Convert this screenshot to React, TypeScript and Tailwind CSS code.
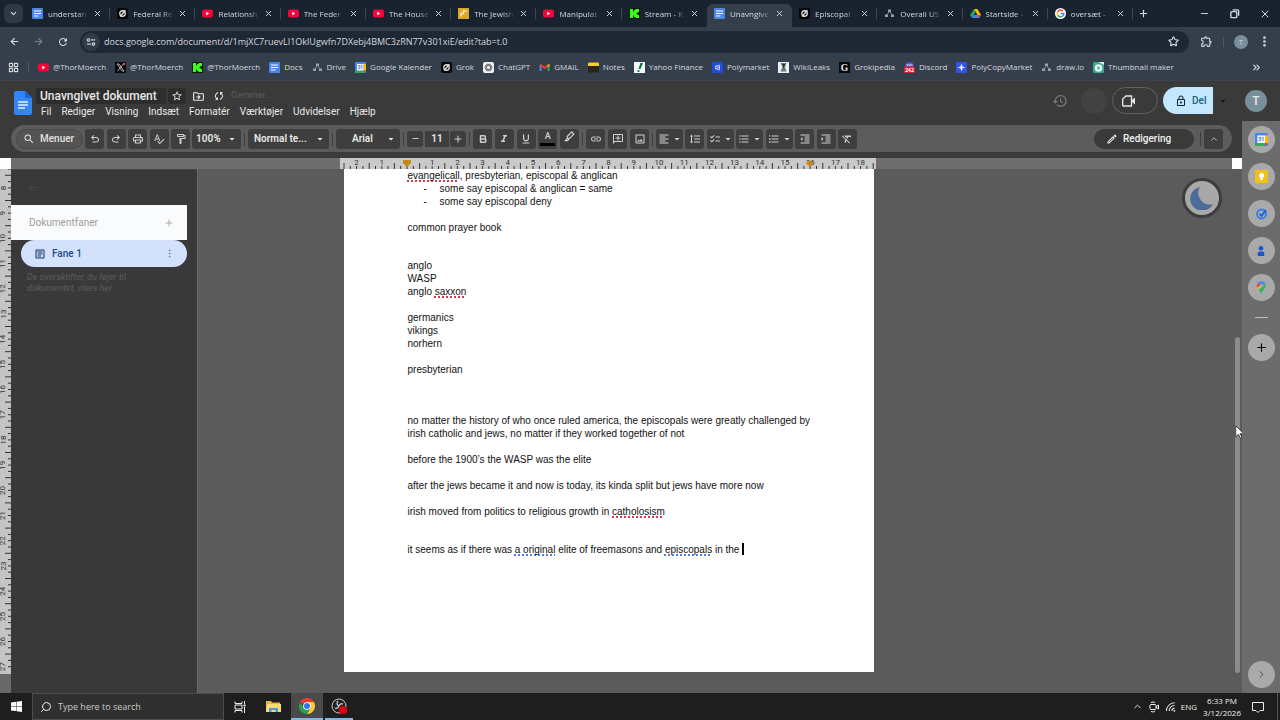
import type { ReactNode } from "react";
import {
  ArrowLeft,
  ArrowRight,
  Bold,
  ChevronDown,
  ChevronRight,
  ChevronUp,
  ChevronsRight,
  EllipsisVertical,
  LayoutGrid,
  Minus,
  Plus,
  Search,
  Star,
  X,
} from "lucide-react";
import {
  MdArrowDropDown,
  MdChecklist,
  MdFormatAlignLeft,
  MdFormatClear,
  MdFormatIndentDecrease,
  MdFormatIndentIncrease,
  MdFormatItalic,
  MdFormatLineSpacing,
  MdFormatListBulleted,
  MdFormatListNumbered,
  MdFormatUnderlined,
  MdLink,
  MdOutlineAddComment,
  MdOutlineArticle,
  MdOutlineDriveFileMove,
  MdOutlineEdit,
  MdOutlineExtension,
  MdOutlineFormatPaint,
  MdOutlineHistory,
  MdOutlineImage,
  MdOutlineLock,
  MdOutlinePrint,
  MdRefresh,
  MdSearch,
  MdSpellcheck,
  MdStarOutline,
  MdSync,
} from "react-icons/md";

type IconName =
  | "docs"
  | "grok"
  | "youtube"
  | "jewish"
  | "kick"
  | "drawio"
  | "drive"
  | "google"
  | "x"
  | "calendar"
  | "chatgpt"
  | "gmail"
  | "notes"
  | "yahoo"
  | "polymarket"
  | "wikileaks"
  | "grokipedia"
  | "discord"
  | "polycopy"
  | "thumbnail";

const tabs: { icon: IconName; title: string; active?: boolean }[] = [
  { icon: "docs", title: "understan" },
  { icon: "grok", title: "Federal Re" },
  { icon: "youtube", title: "Relationsh" },
  { icon: "youtube", title: "The Feder" },
  { icon: "youtube", title: "The House" },
  { icon: "jewish", title: "The Jewish" },
  { icon: "youtube", title: "Manipulat" },
  { icon: "kick", title: "Stream - K" },
  { icon: "docs", title: "Unavngive", active: true },
  { icon: "grok", title: "Episcopal" },
  { icon: "drawio", title: "Overall US" },
  { icon: "drive", title: "Startside -" },
  { icon: "google", title: "oversæt -" },
];

const bookmarks: { icon: IconName; title: string }[] = [
  { icon: "youtube", title: "@ThorMoerch" },
  { icon: "x", title: "@ThorMoerch" },
  { icon: "kick", title: "@ThorMoerch" },
  { icon: "docs", title: "Docs" },
  { icon: "drawio", title: "Drive" },
  { icon: "calendar", title: "Google Kalender" },
  { icon: "grok", title: "Grok" },
  { icon: "chatgpt", title: "ChatGPT" },
  { icon: "gmail", title: "GMAIL" },
  { icon: "notes", title: "Notes" },
  { icon: "yahoo", title: "Yahoo Finance" },
  { icon: "polymarket", title: "Polymarket" },
  { icon: "wikileaks", title: "WikiLeaks" },
  { icon: "grokipedia", title: "Grokipedia" },
  { icon: "discord", title: "Discord" },
  { icon: "polycopy", title: "PolyCopyMarket" },
  { icon: "drawio", title: "draw.io" },
  { icon: "thumbnail", title: "Thumbnail maker" },
];

const menus = ["Fil", "Rediger", "Visning", "Indsæt", "Formatér", "Værktøjer", "Udvidelser", "Hjælp"];

const iconShapes: Record<IconName, ReactNode> = {
  docs: (
    <>
      <rect width="22" height="22" rx="2" fill="#4c86e8" />
      <path d="M4 6h14M4 11h14M4 16h9" stroke="#fff" strokeWidth="2.4" />
    </>
  ),
  grok: (
    <>
      <rect width="22" height="22" rx="4" fill="#050505" />
      <circle cx="11" cy="11" r="5.5" fill="none" stroke="#e5e5e5" strokeWidth="2.6" />
      <path d="M6 17L17 4.5" stroke="#e5e5e5" strokeWidth="2.4" />
    </>
  ),
  youtube: (
    <>
      <rect y="3" width="22" height="16" rx="4" fill="#f4043a" />
      <path d="M8.5 7.5v7l6-3.5z" fill="#fff" />
    </>
  ),
  jewish: (
    <>
      <rect width="22" height="22" fill="#d9a92d" />
      <path d="M6 17V11h5V6h7" fill="none" stroke="#f7e9bb" strokeWidth="3" />
    </>
  ),
  kick: (
    <>
      <rect width="22" height="22" fill="#0c1a0a" />
      <path d="M2 2h6v5h2V4h3V2h7v6h-3v2h-2v2h2v2h3v6h-7v-2h-3v-3H8v5H2z" fill="#3ffb1c" />
    </>
  ),
  drawio: (
    <>
      <path d="M11 6L5 16M11 6l6 10" stroke="#7d848e" strokeWidth="2" />
      <path d="M8 3h6v5H8zM2 13h6v5H2zM14 13h6v5h-6z" fill="#9aa0a8" />
    </>
  ),
  drive: (
    <>
      <path d="M8 2h7l7 12h-7z" fill="#fbbc05" />
      <path d="M8 2l3.5 6L4 20 0 14z" fill="#21a464" />
      <path d="M4 20l4-6h14l-4 6z" fill="#4285f4" />
      <path d="M15 14h7l-4 6z" fill="#ea4335" />
    </>
  ),
  google: (
    <>
      <circle cx="11" cy="11" r="11" fill="#fff" />
      <path d="M5.4 7.5A6.7 6.7 0 0 1 16 6.2" fill="none" stroke="#ea4335" strokeWidth="3" />
      <path d="M5.4 14.5a6.7 6.7 0 0 1 0-7" fill="none" stroke="#fbbc05" strokeWidth="3" />
      <path d="M15.5 16A6.7 6.7 0 0 1 5.4 14.5" fill="none" stroke="#34a853" strokeWidth="3" />
      <path d="M11 11h6.5a6.4 6.4 0 0 1-2 5" fill="none" stroke="#4285f4" strokeWidth="3" />
    </>
  ),
  x: (
    <>
      <rect width="22" height="22" fill="#080808" />
      <path d="M4 4l10 14h4L8 4z" fill="none" stroke="#d4d4d4" strokeWidth="1.6" />
      <path d="M17 4L5 18" stroke="#d4d4d4" strokeWidth="1.6" />
      <circle cx="18" cy="4" r="2.5" fill="#e5484d" />
    </>
  ),
  calendar: (
    <>
      <rect width="22" height="22" rx="2" fill="#4285f4" />
      <path d="M17 4h5v13h-5z" fill="#fbbc04" />
      <path d="M0 17h17v5H2a2 2 0 0 1-2-2z" fill="#34a853" />
      <path d="M17 17h5l-5 5z" fill="#ea4335" />
      <rect x="4" y="4" width="13" height="13" fill="#f3f6fc" />
      <text x="10.5" y="14" fontSize="9" fontWeight="700" textAnchor="middle" fill="#3f74d1">
        31
      </text>
    </>
  ),
  chatgpt: (
    <>
      <rect width="22" height="22" rx="4" fill="#f2f2f2" />
      <g fill="none" stroke="#555" strokeWidth="1.4">
        <ellipse cx="11" cy="11" rx="7.5" ry="4" />
        <ellipse cx="11" cy="11" rx="7.5" ry="4" transform="rotate(60 11 11)" />
        <ellipse cx="11" cy="11" rx="7.5" ry="4" transform="rotate(120 11 11)" />
      </g>
    </>
  ),
  gmail: (
    <>
      <path d="M3 18V6" stroke="#4285f4" strokeWidth="4" />
      <path d="M19 18V6" stroke="#34a853" strokeWidth="4" />
      <path d="M2 5l9 7 9-7" fill="none" stroke="#ea4335" strokeWidth="4" />
      <path d="M17 6l4-2v5h-4z" fill="#fbbc04" />
    </>
  ),
  notes: (
    <>
      <rect y="1" width="22" height="20" rx="2" fill="#29251b" />
      <path d="M0 3a2 2 0 0 1 2-2h18a2 2 0 0 1 2 2v5H0z" fill="#f7ce2f" />
    </>
  ),
  yahoo: (
    <>
      <rect width="22" height="22" fill="#f5f8f6" />
      <path d="M13 2h5l-5 12h-4z" fill="#0b6b45" />
      <circle cx="9" cy="18" r="2.2" fill="#0b6b45" />
    </>
  ),
  polymarket: (
    <>
      <rect width="22" height="22" rx="4" fill="#1f4de0" />
      <path d="M15 6v10L7 13.5v-5zM7 8.5l8 2.5-8 2.5" fill="none" stroke="#dfe7ff" strokeWidth="1.5" />
    </>
  ),
  wikileaks: (
    <>
      <rect width="22" height="22" fill="#e9f1f1" />
      <path d="M5 2h12l-3 8 3 9H5l4-9z" fill="#69787b" />
      <path d="M9 4h5l-3 9z" fill="#20292b" />
    </>
  ),
  grokipedia: (
    <>
      <rect width="22" height="22" fill="#0a0a0a" />
      <text x="11" y="18" fontSize="19" fontWeight="700" fontFamily="Liberation Serif, serif" textAnchor="middle" fill="#f2f2f2">
        G
      </text>
    </>
  ),
  discord: (
    <>
      <circle cx="11" cy="9" r="9" fill="#5157c9" />
      <path d="M5 6h12" stroke="#e4e6ff" strokeWidth="2" />
      <rect y="9" width="22" height="13" rx="3" fill="#e01e2b" />
      <text x="11" y="19.5" fontSize="10" fontWeight="700" textAnchor="middle" fill="#fff">
        242
      </text>
    </>
  ),
  polycopy: (
    <>
      <rect width="22" height="22" rx="2" fill="#3454e6" />
      <path d="M11 3l2 6 6 2-6 2-2 6-2-6-6-2 6-2z" fill="#e8edff" />
    </>
  ),
  thumbnail: (
    <>
      <rect width="22" height="22" rx="3" fill="#35ad8b" />
      <circle cx="11" cy="12" r="7.5" fill="#f0fbf7" />
      <path d="M9 8l6 4-6 4z" fill="#35ad8b" />
      <path d="M11 0h11v6z" fill="#d9f5ea" />
    </>
  ),
};

function SiteIcon({ name }: { name: IconName }) {
  return (
    <svg viewBox="0 0 22 22" className="size-[11px] shrink-0" aria-hidden="true">
      {iconShapes[name]}
    </svg>
  );
}

function UndoIcon({ flip }: { flip?: boolean }) {
  return (
    <svg viewBox="0 -960 960 960" fill="currentColor" className={flip ? "size-3 -scale-x-100" : "size-3"}>
      <path d="M280-200v-80h284q63 0 109.5-40T720-420q0-60-46.5-100T564-560H312l104 104-56 56-200-200 200-200 56 56-104 104h252q97 0 166.5 63T800-420q0 94-69.5 157T564-200H280Z" />
    </svg>
  );
}

// ---------- Browser ----------

function TabStrip() {
  return (
    <div className="flex h-[27px] bg-[#19222f]">
      <div className="flex w-[25px] items-center pl-1">
        <button aria-label="Search tabs" className="flex size-[19px] items-center justify-center rounded-md bg-[#303844]">
          <ChevronDown className="size-[9px]" strokeWidth={3} />
        </button>
      </div>
      <div className="flex min-w-0 flex-1">
        {tabs.map((tab, i) => (
          <div
            key={i}
            className={
              tab.active
                ? "mt-1 flex min-w-0 flex-1 items-center rounded-t-md bg-[#353e4b] pb-1 pl-[7px]"
                : "flex min-w-0 flex-1 items-center pl-[7px]"
            }
          >
            <SiteIcon name={tab.icon} />
            <a
              href="#"
              className="ml-[5px] min-w-0 flex-1 overflow-hidden whitespace-nowrap text-[8px] [mask-image:linear-gradient(to_right,#000_70%,transparent)]"
            >
              {tab.title}
            </a>
            <button aria-label={"Close " + tab.title} className="ml-1">
              <X className="size-[9px]" strokeWidth={2.5} />
            </button>
            <span className={tab.active || tabs[i + 1]?.active ? "ml-[7px] w-px" : "ml-[7px] h-3 w-px bg-[#3b4450]"} />
          </div>
        ))}
      </div>
      <div className="flex w-[147px] items-center">
        <button aria-label="New tab" className="ml-[5px]">
          <Plus className="size-[11px]" strokeWidth={2.5} />
        </button>
        <div className="ml-auto flex items-center gap-[19px] pr-[9px]">
          <button aria-label="Minimize">
            <Minus className="size-[11px]" />
          </button>
          <button aria-label="Restore">
            <svg viewBox="0 0 12 12" className="size-[11px]" fill="none" stroke="currentColor" strokeWidth="1.5">
              <rect x="2" y="4" width="6.5" height="6.5" rx="1" />
              <path d="M4 2h5.500a1 1 0 0 1 1 1v5.500" />
            </svg>
          </button>
          <button aria-label="Close">
            <X className="size-3" />
          </button>
        </div>
      </div>
    </div>
  );
}

function AddressRow() {
  return (
    <div className="flex h-[29px] items-center bg-[#353e4b] px-[9px]">
      <div className="flex w-[71px] items-center gap-[13px]">
        <button aria-label="Back">
          <ArrowLeft className="size-[11px]" strokeWidth={2.5} />
        </button>
        <button aria-label="Forward" className="text-[#77808b]">
          <ArrowRight className="size-[11px]" strokeWidth={2.5} />
        </button>
        <button aria-label="Reload">
          <MdRefresh className="size-3" />
        </button>
      </div>
      <div className="flex h-[22px] min-w-0 flex-1 items-center rounded-full bg-[#1e2734] pr-[10px] pl-[2px]">
        <span className="flex size-[18px] items-center justify-center rounded-full bg-[#313a47]">
          <svg viewBox="0 0 12 12" className="size-[10px]" fill="none" stroke="currentColor" strokeWidth="1.3">
            <circle cx="3" cy="3.5" r="1.5" />
            <path d="M6 3.500h5" />
            <circle cx="9" cy="8.5" r="1.5" />
            <path d="M1 8.500h5" />
          </svg>
        </span>
        <input
          aria-label="Address"
          className="ml-1 min-w-0 flex-1 bg-transparent text-[9px] outline-none"
          defaultValue="docs.google.com/document/d/1mjXC7ruevLI1OklUgwfn7DXebj4BMC3zRN77v301xiE/edit?tab=t.0"
        />
        <button aria-label="Bookmark this tab">
          <Star className="size-[11px]" strokeWidth={2.5} />
        </button>
      </div>
      <div className="ml-[11px] flex items-center gap-[10px]">
        <button aria-label="Extensions">
          <MdOutlineExtension className="size-[13px]" />
        </button>
        <span className="h-[10px] w-px bg-[#505965]" />
        <button className="flex size-[14px] items-center justify-center rounded-full bg-[#78909c] text-[8px]">T</button>
        <button aria-label="Menu">
          <EllipsisVertical className="size-[13px]" strokeWidth={3} />
        </button>
      </div>
    </div>
  );
}

function BookmarkBar() {
  return (
    <div className="flex h-6 items-center gap-[9px] bg-[#353e4b] pr-[18px] pb-[2px] pl-2 text-[8px]">
      <button aria-label="Apps">
        <LayoutGrid className="size-[11px]" strokeWidth={2.5} />
      </button>
      <span className="h-[10px] w-px bg-[#505965]" />
      {bookmarks.map((b, i) => (
        <a key={i} href="#" className="flex items-center gap-1 whitespace-nowrap">
          <SiteIcon name={b.icon} />
          {b.title}
        </a>
      ))}
      <button aria-label="More bookmarks" className="ml-auto">
        <ChevronsRight className="size-[11px]" strokeWidth={2.5} />
      </button>
    </div>
  );
}

// ---------- Document header and toolbar ----------

function DocHeader() {
  return (
    <header className="flex h-[41px] items-start border-t border-[#3c444f] bg-[#3a3a3a] pl-[14px] text-[#e8e8e8]">
      <svg viewBox="0 0 18 24" className="mt-[10px] h-6 w-[18px]" aria-hidden="true">
        <path d="M2 0h9l7 7v15a2 2 0 0 1-2 2H2a2 2 0 0 1-2-2V2a2 2 0 0 1 2-2z" fill="#3286fb" />
        <path d="M11 0l7 7h-7z" fill="#1a63d6" />
        <path d="M4 11h10M4 14h10M4 17h7" stroke="#e6effd" strokeWidth="1.5" />
      </svg>
      <div className="ml-1 pt-[7px]">
        <div className="flex items-center">
          <h1 className="w-[130px] rounded-[3px] bg-[#2d2d2d] pl-1 text-xs leading-4 font-medium whitespace-nowrap">
            Unavngivet dokument
          </h1>
          <button aria-label="Star" className="ml-[2px] flex h-4 w-[18px] items-center justify-center rounded-[3px] bg-[#2d2d2d]">
            <MdStarOutline className="size-3" />
          </button>
          <button aria-label="Move" className="ml-[6px]">
            <MdOutlineDriveFileMove className="size-[13px]" />
          </button>
          <MdSync className="ml-2 size-3 rotate-45" />
          <span className="ml-[6px] text-[9px] text-[#5e5e5e]">Gemmer...</span>
        </div>
        <nav className="flex gap-[10px] pl-[5px] text-[10px] leading-4">
          {menus.map((m) => (
            <button key={m}>{m}</button>
          ))}
        </nav>
      </div>
      <div className="ml-auto flex items-center pt-[6px] pr-[13px]">
        <button aria-label="History" className="text-[#7a7a7a]">
          <MdOutlineHistory className="size-4" />
        </button>
        <span className="ml-[13px] size-[26px] rounded-full bg-[#424242]" />
        <button aria-label="Meet" className="ml-[5px] flex h-[27px] w-[46px] items-center rounded-full border border-[#636363] pl-[9px]">
          <svg viewBox="0 0 14 12" className="h-3 w-[14px]" fill="none" stroke="currentColor" strokeWidth="1.3">
            <path d="M4 1h5.500v10H1.500a.8.8 0 0 1-.8-.8V4z" />
            <path d="M10 5l3-2.500v7L10 7z" fill="currentColor" stroke="none" />
          </svg>
        </button>
        <button className="ml-[5px] flex h-[27px] w-[50px] items-center gap-[5px] rounded-l-full bg-[#c2e7ff] pl-3 text-[10px] font-medium text-[#225f7c]">
          <MdOutlineLock className="size-3 text-[#0c2230]" />
          Del
        </button>
        <button aria-label="Share options" className="ml-1 text-[#111]">
          <MdArrowDropDown className="size-3" />
        </button>
        <button className="ml-4 flex size-[22px] items-center justify-center rounded-full bg-[#78909c] text-xs font-medium">T</button>
      </div>
    </header>
  );
}

function ToolButton({ label, children }: { label: string; children: ReactNode }) {
  return (
    <button
      aria-label={label}
      className="flex h-5 w-[19px] items-center justify-center rounded-[3px] bg-[#3e3e3e] text-xs text-[#d0d0d0]"
    >
      {children}
    </button>
  );
}

function WideButton({ label, children }: { label: string; children: ReactNode }) {
  return (
    <button
      aria-label={label}
      className="flex h-5 w-[27px] items-center justify-between rounded-[3px] bg-[#3e3e3e] pl-[2px] text-xs text-[#d0d0d0]"
    >
      {children}
      <MdArrowDropDown className="size-3" />
    </button>
  );
}

function ToolSelect({ label, value, className }: { label: string; value: string; className: string }) {
  return (
    <div className={"relative h-5 rounded-[3px] bg-[#3e3e3e] text-[#e8e8e8] " + className}>
      <select
        aria-label={label}
        className="block h-full w-full appearance-none bg-transparent text-[10px] font-semibold outline-none"
      >
        <option>{value}</option>
      </select>
      <MdArrowDropDown className="pointer-events-none absolute top-1 right-[3px] size-3" />
    </div>
  );
}

function Divider() {
  return <span className="mx-[3px] h-[14px] w-px bg-[#3e3e3e]" />;
}

function Toolbar() {
  return (
    <div className="bg-[#3a3a3a] pt-1 pr-[10px] pb-[6px] pl-[11px]">
      <div className="flex h-[27px] items-center rounded-full bg-[#5c5c5c] pr-[9px] pl-[5px]">
        <button className="mr-[2px] flex h-5 w-[67px] items-center gap-[5px] rounded-full border border-[#474747] bg-[#545454] pl-[6px] text-[10px] font-medium text-[#e0e0e0]">
          <MdSearch className="size-3" />
          Menuer
        </button>
        <div className="flex w-[105px] justify-between">
          <ToolButton label="Undo">
            <UndoIcon />
          </ToolButton>
          <ToolButton label="Redo">
            <UndoIcon flip />
          </ToolButton>
          <ToolButton label="Print">
            <MdOutlinePrint />
          </ToolButton>
          <ToolButton label="Spelling">
            <MdSpellcheck />
          </ToolButton>
          <ToolButton label="Paint format">
            <MdOutlineFormatPaint />
          </ToolButton>
        </div>
        <ToolSelect label="Zoom" value="100%" className="ml-[2px] w-[49px] pl-1" />
        <Divider />
        <ToolSelect label="Style" value="Normal te..." className="w-[81px] pl-[6px]" />
        <Divider />
        <ToolSelect label="Font" value="Arial" className="w-16 pl-4" />
        <Divider />
        <button aria-label="Smaller" className="flex size-4 items-center justify-center rounded-[3px] bg-[#3e3e3e] text-[#d0d0d0]">
          <Minus className="size-[9px]" strokeWidth={2.5} />
        </button>
        <input
          aria-label="Font size"
          defaultValue="11"
          className="ml-[2px] h-4 w-6 bg-[#3e3e3e] text-center text-[10px] font-semibold text-[#e8e8e8] outline-none"
        />
        <button aria-label="Larger" className="ml-px flex size-4 items-center justify-center rounded-[3px] bg-[#3e3e3e] text-[#d0d0d0]">
          <Plus className="size-[10px]" strokeWidth={2.5} />
        </button>
        <Divider />
        <div className="flex w-[106px] justify-between">
          <ToolButton label="Bold">
            <Bold className="size-[10px]" strokeWidth={3.5} />
          </ToolButton>
          <ToolButton label="Italic">
            <MdFormatItalic />
          </ToolButton>
          <ToolButton label="Underline">
            <MdFormatUnderlined />
          </ToolButton>
          <ToolButton label="Text colour">
            <span className="flex flex-col items-center">
              <span className="text-[9px] leading-[9px] font-medium">A</span>
              <span className="mt-[2px] h-[3px] w-[15px] bg-black" />
            </span>
          </ToolButton>
          <ToolButton label="Highlight">
            <svg viewBox="0 0 12 12" className="mb-1 size-[11px]" fill="none" stroke="currentColor" strokeWidth="1.3">
              <path d="M3.5 6L8.5 1l2.3 2.3-5 5H4.200zM3.5 8L1.5 10.500h2.500l1-1.500" />
            </svg>
          </ToolButton>
        </div>
        <Divider />
        <div className="flex w-[63px] justify-between">
          <ToolButton label="Insert link">
            <MdLink />
          </ToolButton>
          <ToolButton label="Add comment">
            <MdOutlineAddComment className="-scale-x-100" />
          </ToolButton>
          <ToolButton label="Insert image">
            <MdOutlineImage />
          </ToolButton>
        </div>
        <Divider />
        <div className="flex w-[201px] justify-between">
          <WideButton label="Align">
            <MdFormatAlignLeft />
          </WideButton>
          <ToolButton label="Line spacing">
            <MdFormatLineSpacing />
          </ToolButton>
          <WideButton label="Checklist">
            <MdChecklist />
          </WideButton>
          <WideButton label="Bulleted list">
            <MdFormatListBulleted />
          </WideButton>
          <WideButton label="Numbered list">
            <MdFormatListNumbered />
          </WideButton>
          <ToolButton label="Decrease indent">
            <MdFormatIndentDecrease />
          </ToolButton>
          <ToolButton label="Increase indent">
            <MdFormatIndentIncrease />
          </ToolButton>
          <ToolButton label="Clear formatting">
            <MdFormatClear />
          </ToolButton>
        </div>
        <button className="ml-auto flex h-5 w-[100px] items-center gap-[5px] rounded-full bg-[#3a3a3a] pl-3 text-[10px] font-medium text-[#f0f0f0]">
          <MdOutlineEdit className="size-3" />
          Redigering
        </button>
        <span className="mr-[3px] ml-[6px] h-[14px] w-px bg-[#3e3e3e]" />
        <ToolButton label="Hide menus">
          <ChevronUp className="size-[10px]" />
        </ToolButton>
      </div>
    </div>
  );
}

// ---------- Rulers ----------

const CM = 25.2;

function HorizontalRuler() {
  const ticks = Array.from({ length: 85 }, (_, i) => i - 10);
  const labels = Array.from({ length: 21 }, (_, i) => i - 2).filter((n) => n !== 0);
  return (
    <svg width="536" height="11" className="shrink-0 bg-[#c9c9c9]" aria-hidden="true">
      {ticks.map((t) => (
        <path key={t} d={`M${67 + (t * CM) / 4} ${Math.abs(t % 4) === 2 ? 5 : 8}V11`} stroke="#333" strokeWidth="1" />
      ))}
      {labels.map((n) => (
        <text key={n} x={67 + n * CM} y="7" fontSize="8" textAnchor="middle" fill="#333">
          {Math.abs(n)}
        </text>
      ))}
      <path d="M63 2h8v3l-4 4-4-4z" fill="#c58a14" />
      <path d="M466 5l4-3 4 3-4 4z" fill="#c58a14" />
    </svg>
  );
}

function VerticalRuler() {
  const ticks = Array.from({ length: 80 }, (_, i) => i);
  const labels = Array.from({ length: 20 }, (_, i) => i + 8);
  return (
    <div className="w-[11px] shrink-0 bg-[#686868]">
      <svg width="11" height="505" className="bg-[#c4c4c4]" aria-hidden="true">
        {ticks.map((t) => (
          <path key={t} d={`M${t % 4 === 1 ? 5 : 8} ${(t * CM) / 4}H11`} stroke="#333" strokeWidth="1" />
        ))}
        {labels.map((n) => {
          const y = 19 + (n - 8) * CM;
          return (
            <text key={n} x="3" y={y} fontSize="8" textAnchor="middle" dominantBaseline="central" fill="#333" transform={`rotate(-90 3 ${y})`}>
              {n}
            </text>
          );
        })}
      </svg>
    </div>
  );
}

// ---------- Document ----------

function Outline() {
  return (
    <aside className="w-[186px] shrink-0 border-t border-[#444] bg-[#393939]">
      <button aria-label="Close outline" className="mt-3 ml-4 block text-[#4a4a4a]">
        <ArrowLeft className="size-[11px]" />
      </button>
      <div className="mt-3 mr-[10px] flex h-[35px] items-center justify-between bg-[#fafbfc] pr-[13px] pl-[18px] text-[10px] text-[#9b9b9b]">
        <h2>Dokumentfaner</h2>
        <button aria-label="Add tab">
          <Plus className="size-[10px]" />
        </button>
      </div>
      <div className="mr-[10px] ml-[10px] flex h-[27px] items-center rounded-full bg-[#d3e1fc] pr-3 pl-[13px] text-[10px] font-medium text-[#204a8c]">
        <MdOutlineArticle className="size-3 text-[#12315f]" />
        <a href="#" className="ml-[6px]">
          Fane 1
        </a>
        <button aria-label="Tab options" className="ml-auto text-[#7185a8]">
          <EllipsisVertical className="size-[11px]" />
        </button>
      </div>
      <p className="w-[130px] pt-[5px] pl-4 text-[9px] leading-[11px] text-[#5c5c5c] italic">
        De overskrifter, du føjer til dokumentet, vises her.
      </p>
    </aside>
  );
}

function Misspelled({ children }: { children: string }) {
  return (
    <span className="underline decoration-[#d9365a] decoration-dotted decoration-2 underline-offset-1 [text-decoration-skip-ink:none]">
      {children}
    </span>
  );
}

function Grammar({ children }: { children: string }) {
  return (
    <span className="underline decoration-[#4f7fe0] decoration-dotted decoration-2 underline-offset-1 [text-decoration-skip-ink:none]">
      {children}
    </span>
  );
}

function DocumentPage() {
  return (
    <article className="h-[503px] w-[530px] shrink-0 bg-white pr-12 pl-16 font-['Liberation_Sans',Arial,sans-serif] text-[10px] leading-[13px] text-[#111]">
      <p>
        <Misspelled>evangelicall</Misspelled>, presbyterian, episcopal &amp; anglican
      </p>
      <ul>
        <li className="flex pl-4">
          <span className="w-4">-</span>some say episcopal &amp; anglican = same
        </li>
        <li className="flex pl-4">
          <span className="w-4">-</span>some say episcopal deny
        </li>
      </ul>
      <p className="mt-[13px]">common prayer book</p>
      <p className="mt-[25px]">
        anglo
        <br />
        WASP
        <br />
        anglo <Misspelled>saxxon</Misspelled>
      </p>
      <p className="mt-[13px]">
        germanics
        <br />
        vikings
        <br />
        norhern
      </p>
      <p className="mt-[13px]">presbyterian</p>
      <p className="mt-[38px]">
        no matter the history of who once ruled america, the episcopals were greatly challenged by
        <br />
        irish catholic and jews, no matter if they worked together of not
      </p>
      <p className="mt-[13px]">before the 1900’s the WASP was the elite</p>
      <p className="mt-[13px]">after the jews became it and now is today, its kinda split but jews have more now</p>
      <p className="mt-[13px]">
        irish moved from politics to religious growth in <Misspelled>catholosism</Misspelled>
      </p>
      <p className="mt-[25px] flex whitespace-pre">
        it seems as if there was <Grammar>a original</Grammar> elite of freemasons and <Grammar>episcopals</Grammar> in the{" "}
        <span className="h-3 w-[2px] bg-black" />
      </p>
    </article>
  );
}

function Workspace() {
  return (
    <div className="flex min-h-0 flex-1">
      <VerticalRuler />
      <Outline />
      <main className="relative flex min-w-0 flex-1 overflow-hidden border-l border-[#6a6a6a] bg-[#5b5b5b]">
        <div className="flex min-w-0 flex-1 justify-center pr-[215px]">
          <DocumentPage />
        </div>
        <div className="flex w-2 flex-col pb-5 pl-px">
          <div className="mt-auto h-2/3 w-[5px] rounded-full bg-[#8c8c8c]" />
        </div>
        <button
          aria-label="Dark mode"
          className="absolute top-[9px] right-5 flex size-10 items-center justify-center rounded-full border-[3px] border-[#3d3d3d] bg-[#a8a8a8]"
        >
          <svg viewBox="0 0 24 24" className="size-6">
            <path d="M10 1a12 12 0 1 0 13 17A11.500 11.500 0 0 1 10 1z" fill="#4d6b99" />
          </svg>
        </button>
        <svg viewBox="0 0 12 18" className="absolute top-[256px] right-0 h-[14px] w-[7px]" preserveAspectRatio="xMinYMin slice" aria-hidden="true">
          <path d="M1 1v14l3.500-3 2.500 5 2-1-2.400-4.800H11z" fill="#fff" stroke="#222" />
        </svg>
      </main>
    </div>
  );
}

// ---------- Side rail ----------

function RailButton({ label, children }: { label: string; children: ReactNode }) {
  return (
    <button aria-label={label} className="flex size-[27px] items-center justify-center rounded-full bg-[#a9a9a9]">
      {children}
    </button>
  );
}

function SideRail() {
  return (
    <aside className="flex w-[38px] shrink-0 flex-col items-center gap-[10px] bg-[#6c6c6c] pt-[5px] pb-[5px]">
      <RailButton label="Calendar">
        <svg viewBox="0 0 22 22" className="size-[13px]">
          {iconShapes.calendar}
        </svg>
      </RailButton>
      <RailButton label="Keep">
        <svg viewBox="0 0 13 13" className="size-[13px]">
          <rect width="13" height="13" rx="1" fill="#eec11c" />
          <circle cx="6.5" cy="5.5" r="2.5" fill="#fff" />
          <path d="M5.3 8h2.400v2H5.300z" fill="#fff" />
        </svg>
      </RailButton>
      <RailButton label="Tasks">
        <svg viewBox="0 0 13 13" className="size-[13px]" fill="none" strokeWidth="1.8">
          <circle cx="6.5" cy="7" r="4.5" stroke="#2f7cf0" />
          <path d="M4.5 6.800l2 2L11 3" stroke="#1a5fd0" />
        </svg>
      </RailButton>
      <RailButton label="Contacts">
        <svg viewBox="0 0 13 13" className="size-3" fill="#1a56c4">
          <circle cx="6.5" cy="3.5" r="2.5" />
          <path d="M3 12V9a2 2 0 0 1 2-2h3a2 2 0 0 1 2 2v3z" />
        </svg>
      </RailButton>
      <RailButton label="Maps">
        <svg viewBox="0 0 12 14" className="h-[13px] w-[11px]">
          <path d="M6 0a5 5 0 0 1 4.500 3L6 5z" fill="#4a86ee" />
          <path d="M6 0a5 5 0 0 0-4 1.800L4.500 5 6 4z" fill="#4a86ee" />
          <path d="M2 1.800a5 5 0 0 0-.6 5.500L5 5z" fill="#e6453a" />
          <path d="M1.400 7.300L3 9.500 7 6 5 5z" fill="#f2bd1d" />
          <path d="M10.500 3c1.300 4-3 6-4.500 11C5.500 12 4 11 3 9.500z" fill="#35b45a" />
          <circle cx="6" cy="5" r="1.8" fill="#a9a9a9" />
        </svg>
      </RailButton>
      <span className="my-[6px] h-px w-[13px] bg-[#bdbdbd]" />
      <RailButton label="Get add-ons">
        <Plus className="size-[13px] text-black" />
      </RailButton>
      <div className="mt-auto flex">
        <RailButton label="Hide side panel">
          <ChevronRight className="size-[11px] text-[#444]" />
        </RailButton>
      </div>
    </aside>
  );
}

// ---------- Taskbar ----------

function Taskbar() {
  return (
    <footer className="flex h-[27px] shrink-0 items-stretch bg-[#1e1e1e] font-['Open_Sans','Noto_Sans',sans-serif] text-[#eee]">
      <button aria-label="Start" className="flex w-8 items-center justify-center">
        <svg viewBox="0 0 12 12" className="size-[11px]" fill="#fff">
          <path d="M0 1.700l5.500-.8v4.800H0zM6 .8L12 0v5.700H6zM0 6.200h5.500V11L0 10.300zM6 6.200h6V12l-6-.9z" />
        </svg>
      </button>
      <label className="flex w-48 items-center border border-[#4d4d4d] bg-[#303030] pl-[7px]">
        <Search className="size-3 -scale-x-100" />
        <input
          aria-label="Search"
          placeholder="Type here to search"
          className="ml-[6px] min-w-0 flex-1 bg-transparent text-[9px] placeholder-[#c9c9c9] outline-none"
        />
      </label>
      <button aria-label="Task view" className="flex w-8 items-center justify-center">
        <svg viewBox="0 0 12 12" className="size-3" fill="none" stroke="currentColor">
          <path d="M1 .5v2h7v-2M1 11.500v-2h7v2M1 4h7v4H1zM10.500 0v3M10.500 6v6" />
          <path d="M9.500 4.500h2" strokeWidth="2" />
        </svg>
      </button>
      <button aria-label="File Explorer" className="flex w-[35px] items-center justify-center">
        <svg viewBox="0 0 15 13" className="h-[13px] w-[15px]">
          <path d="M0 1h5l1 1.500h8V12H0z" fill="#e9b93e" />
          <path d="M1 4h14v8H0z" fill="#fbdb77" />
          <path d="M3 12V8h9v4h-2.500v-2h-4v2z" fill="#4b9bd2" />
        </svg>
      </button>
      <button aria-label="Chrome" className="flex w-8 items-center justify-center border-b-2 border-[#7fb8e6] bg-[#4a4a4a]">
        <svg viewBox="0 0 24 24" className="size-4">
          <path d="M12 12L1.600 6A12 12 0 0 1 22.400 6H12z" fill="#e33b2e" />
          <path d="M22.400 6A12 12 0 0 1 12 24l5.200-9L12 6z" fill="#fcc934" />
          <path d="M1.600 6A12 12 0 0 0 12 24l5.200-9H7z" fill="#2aa14c" />
          <circle cx="12" cy="12" r="5.8" fill="#fff" />
          <circle cx="12" cy="12" r="4.5" fill="#2f76e6" />
        </svg>
      </button>
      <button aria-label="OBS" className="ml-[2px] flex w-7 items-center justify-center border-b-2 border-[#7fb8e6]">
        <svg viewBox="0 0 16 16" className="size-4">
          <circle cx="8" cy="8" r="7" fill="#222" stroke="#c8c8c8" />
          <path d="M7 3a3 3 0 0 0 1 5M12 6a3 3 0 0 0-4 2M4 10a3 3 0 0 0 4-2" fill="none" stroke="#c8c8c8" strokeWidth="1.3" />
          <circle cx="12" cy="12" r="4" fill="#e3000f" />
        </svg>
      </button>
      <div className="ml-auto flex items-center text-[8px]">
        <ChevronUp className="size-[11px]" />
        <svg viewBox="0 0 12 12" className="ml-[5px] size-3" fill="none" stroke="currentColor">
          <rect x="2" y="3.5" width="6" height="5" rx="1" />
          <path d="M8 6l2.500-2v4zM3 1.500q2-1 4 0M3 10.500q2 1 4 0" />
        </svg>
        <svg viewBox="0 0 12 12" className="ml-[5px] size-[11px]" fill="none" stroke="currentColor" strokeWidth="1.1">
          <path d="M1.500 11A9 9 0 0 1 10.500 2M4.500 11a6 6 0 0 1 6-6M7.500 11a3 3 0 0 1 3-3" />
          <circle cx="10.3" cy="10.7" r="1" fill="currentColor" stroke="none" />
        </svg>
        <span className="ml-[5px]">ENG</span>
        <time className="ml-[6px] text-center leading-3">
          6:33 PM
          <br />
          3/12/2026
        </time>
        <button aria-label="Notifications" className="ml-[11px]">
          <svg viewBox="0 0 12 12" className="size-3" fill="none" stroke="currentColor">
            <path d="M.5 1.500h11v8H8L6 11.500l-2-2H.5z" />
          </svg>
        </button>
        <span className="ml-[13px] h-[27px] w-px bg-[#555]" />
        <span className="w-[2px]" />
      </div>
    </footer>
  );
}

export default function App() {
  return (
    <div className="flex h-screen flex-col overflow-hidden bg-[#3a3a3a]">
      <div className="font-['Open_Sans','Noto_Sans',sans-serif] text-[#d5d9df]">
        <TabStrip />
        <AddressRow />
        <BookmarkBar />
      </div>
      <div className="flex min-h-0 flex-1 flex-col font-[Roboto,sans-serif]">
        <DocHeader />
        <div className="flex min-h-0 flex-1">
          <div className="flex min-w-0 flex-1 flex-col">
            <Toolbar />
            <div className="flex h-[11px] bg-[#6e6e6e]">
              <span className="w-[11px] bg-white" />
              <div className="flex flex-1 justify-center pr-[27px]">
                <HorizontalRuler />
              </div>
              <span className="w-[10px] bg-white" />
            </div>
            <Workspace />
          </div>
          <SideRail />
        </div>
      </div>
      <Taskbar />
    </div>
  );
}
